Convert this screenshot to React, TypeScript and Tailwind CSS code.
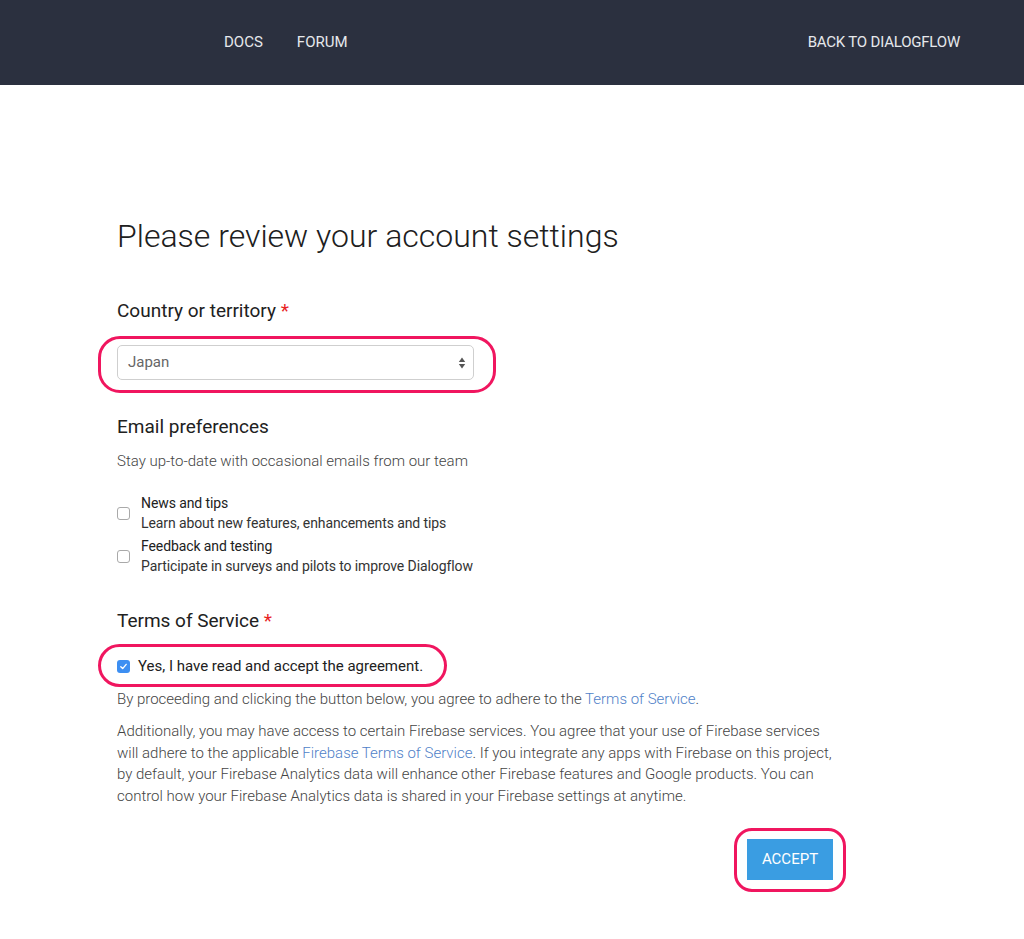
import { useState } from "react";

function Highlight({ className }: { className: string }) {
  return (
    <div
      className={`pointer-events-none absolute border-[3px] border-[#f0165f] ${className}`}
    />
  );
}

function Check({ checked }: { checked: boolean }) {
  if (checked) {
    return (
      <span className="flex h-[13px] w-[13px] shrink-0 items-center justify-center rounded-[3px] bg-[#3d8ff2]">
        <svg width="9" height="9" viewBox="0 0 10 10" fill="none">
          <path d="M2 5.2 L4.1 7.3 L8 2.6" stroke="white" strokeWidth="1.5" strokeLinecap="round" strokeLinejoin="round" />
        </svg>
      </span>
    );
  }
  return (
    <span className="h-[13px] w-[13px] shrink-0 rounded-[3px] border border-[#a9a9a9] bg-white" />
  );
}

export default function App() {
  const [country] = useState("Japan");

  const prefs = [
    { title: "News and tips", desc: "Learn about new features, enhancements and tips" },
    { title: "Feedback and testing", desc: "Participate in surveys and pilots to improve Dialogflow" },
  ];

  return (
    <div className="min-h-[939px] bg-white font-['Roboto',sans-serif] text-[#212121]">
      {/* Top bar */}
      <header className="flex h-[85px] items-center bg-[#2b303f] pb-[1px] pl-[224px] pr-[64px] text-[15px] text-[#e6e8ec]">
        <nav className="flex gap-[34px]">
          <span>DOCS</span>
          <span>FORUM</span>
        </nav>
        <span className="ml-auto tracking-[-0.2px]">BACK TO DIALOGFLOW</span>
      </header>

      <main className="ml-[117px] w-[716px] pt-[131px]">
        <h1 className="text-[32px] font-light leading-[40px] text-[#202020]">
          Please review your account settings
        </h1>

        <h2 className="mt-[41px] text-[19px] leading-[28px]">
          Country or territory <span className="text-[#e8231f]">*</span>
        </h2>

        <div className="relative mt-[20px] w-[357px]">
          <div className="flex h-[35px] items-center justify-between rounded-[5px] border border-[#cfcfcf] bg-white pl-[10px] pr-[7px] text-[15px] text-[#666]">
            <span>{country}</span>
            <svg width="8" height="14" viewBox="0 0 8 14">
              <path d="M4 1.5 L7.2 6 H0.8 Z" fill="#555" />
              <path d="M4 12.5 L7.2 8 H0.8 Z" fill="#555" />
            </svg>
          </div>
          <Highlight className="-left-[19px] -right-[22px] -top-[9px] -bottom-[13px] rounded-[22px]" />
        </div>

        <h2 className="mt-[33px] text-[19px] leading-[28px]">Email preferences</h2>
        <p className="mt-[10px] text-[15px] font-light leading-[20px] text-[#444]">
          Stay up-to-date with occasional emails from our team
        </p>

        <div className="mt-[23px] flex flex-col gap-[4px]">
          {prefs.map((p) => (
            <div key={p.title} className="flex items-center gap-[11px]">
              <Check checked={false} />
              <div className="text-[14px] leading-[19.5px] tracking-[-0.1px]">
                <div className="text-[#212121]">{p.title}</div>
                <div className="text-[#333]">{p.desc}</div>
              </div>
            </div>
          ))}
        </div>

        <h2 className="mt-[31px] text-[19px] leading-[28px]">
          Terms of Service <span className="text-[#e8231f]">*</span>
        </h2>

        <div className="relative mt-[21px] flex w-fit items-center gap-[8px] pr-[16px]">
          <Check checked={true} />
          <span className="text-[15px] leading-[20px] text-[#212121]">
            Yes, I have read and accept the agreement.
          </span>
          <Highlight className="-left-[19px] -right-[8px] -top-[12px] -bottom-[11px] rounded-[22px]" />
        </div>

        <p className="mt-[13px] text-[15px] font-light leading-[21px] text-[#444]">
          By proceeding and clicking the button below, you agree to adhere to the{" "}
          <a className="text-[#4f7fc8]">Terms of Service</a>.
        </p>

        <p className="mt-[11px] text-[15px] font-light leading-[21.7px] text-[#444]">
          Additionally, you may have access to certain Firebase services. You agree that your use of
          Firebase services will adhere to the applicable{" "}
          <a className="text-[#4f7fc8]">Firebase Terms of Service</a>. If you integrate any apps with
          Firebase on this project, by default, your Firebase Analytics data will enhance other
          Firebase features and Google products. You can control how your Firebase Analytics data is
          shared in your Firebase settings at anytime.
        </p>

        <div className="mt-[31px] flex justify-end">
          <div className="relative">
            <button className="h-[41px] w-[86px] bg-[#3a9de2] text-[15px] text-white">ACCEPT</button>
            <Highlight className="-left-[13px] -right-[13px] -top-[11px] -bottom-[12px] rounded-[18px]" />
          </div>
        </div>
      </main>
    </div>
  );
}
